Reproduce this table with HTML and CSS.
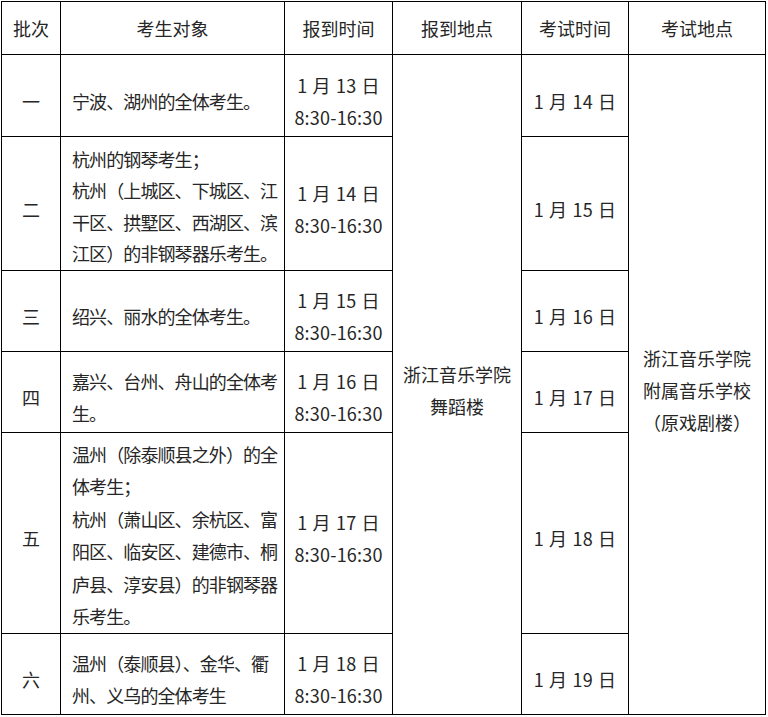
FILE: index.html
```html
<!DOCTYPE html>
<html lang="zh-CN">
<head>
<meta charset="utf-8">
<title>考试安排</title>
<link rel="stylesheet" href="styles.css">
</head>
<body>
<table class="schedule">
  <colgroup>
    <col class="c-batch">
    <col class="c-who">
    <col class="c-report">
    <col class="c-rplace">
    <col class="c-exam">
    <col class="c-eplace">
  </colgroup>
  <thead>
    <tr class="head">
      <th>批次</th>
      <th>考生对象</th>
      <th>报到时间</th>
      <th>报到地点</th>
      <th>考试时间</th>
      <th>考试地点</th>
    </tr>
  </thead>
  <tbody>
    <tr class="r1">
      <td class="batch">一</td>
      <td class="who">宁波、湖州的全体考生。</td>
      <td class="date">1 月 13 日<br>8:30-16:30</td>
      <td class="place" rowspan="6">浙江音乐学院<br>舞蹈楼</td>
      <td class="date">1 月 14 日</td>
      <td class="place" rowspan="6">浙江音乐学院<br>附属音乐学校<br>（原戏剧楼）</td>
    </tr>
    <tr class="r2">
      <td class="batch">二</td>
      <td class="who">杭州的钢琴考生；<br>杭州（上城区、下城区、江<br>干区、拱墅区、西湖区、滨<br>江区）的非钢琴器乐考生。</td>
      <td class="date">1 月 14 日<br>8:30-16:30</td>
      <td class="date">1 月 15 日</td>
    </tr>
    <tr class="r3">
      <td class="batch">三</td>
      <td class="who">绍兴、丽水的全体考生。</td>
      <td class="date">1 月 15 日<br>8:30-16:30</td>
      <td class="date">1 月 16 日</td>
    </tr>
    <tr class="r4">
      <td class="batch">四</td>
      <td class="who">嘉兴、台州、舟山的全体考<br>生。</td>
      <td class="date">1 月 16 日<br>8:30-16:30</td>
      <td class="date">1 月 17 日</td>
    </tr>
    <tr class="r5">
      <td class="batch">五</td>
      <td class="who">温州（除泰顺县之外）的全<br>体考生；<br>杭州（萧山区、余杭区、富<br>阳区、临安区、建德市、桐<br>庐县、淳安县）的非钢琴器<br>乐考生。</td>
      <td class="date">1 月 17 日<br>8:30-16:30</td>
      <td class="date">1 月 18 日</td>
    </tr>
    <tr class="r6">
      <td class="batch">六</td>
      <td class="who">温州（泰顺县）、金华、衢<br>州、义乌的全体考生</td>
      <td class="date">1 月 18 日<br>8:30-16:30</td>
      <td class="date">1 月 19 日</td>
    </tr>
  </tbody>
</table>
</body>
</html>
```
FILE: styles.css
```css
html, body {
  margin: 0;
  padding: 0;
  background: #ffffff;
}

body {
  font-family: "Noto Sans CJK SC", sans-serif;
  color: #262626;
}

.schedule {
  margin: 1px 0 0 1px;
  width: 765px;
  table-layout: fixed;
  border-collapse: collapse;
  font-size: 18px;
}

.c-batch { width: 59px; }
.c-who { width: 224px; }
.c-report { width: 108px; }
.c-rplace { width: 129px; }
.c-exam { width: 107px; }
.c-eplace { width: 137px; }

.schedule th,
.schedule td {
  border: 1px solid #000000;
  text-align: center;
  vertical-align: middle;
  white-space: nowrap;
  line-height: 32px;
}

.schedule th {
  padding: 0;
  font-weight: normal;
}

.schedule td {
  padding: 10px 0 0;
}

.schedule td.who {
  text-align: left;
  padding-left: 11px;
  letter-spacing: -0.9px;
}

.schedule .date {
  font-size: 18px;
  letter-spacing: 0.2px;
  word-spacing: 1px;
}

.head { height: 53px; }
.r1 { height: 82px; }
.r2 { height: 134px; }
.r3 { height: 81px; }
.r4 { height: 81px; }
.r5 { height: 201px; }
.r6 { height: 81px; }

.r2 td.who {
  padding-top: 6px;
  line-height: 31.5px;
}

.r5 td.who {
  padding-top: 4px;
  line-height: 32.5px;
}
```
